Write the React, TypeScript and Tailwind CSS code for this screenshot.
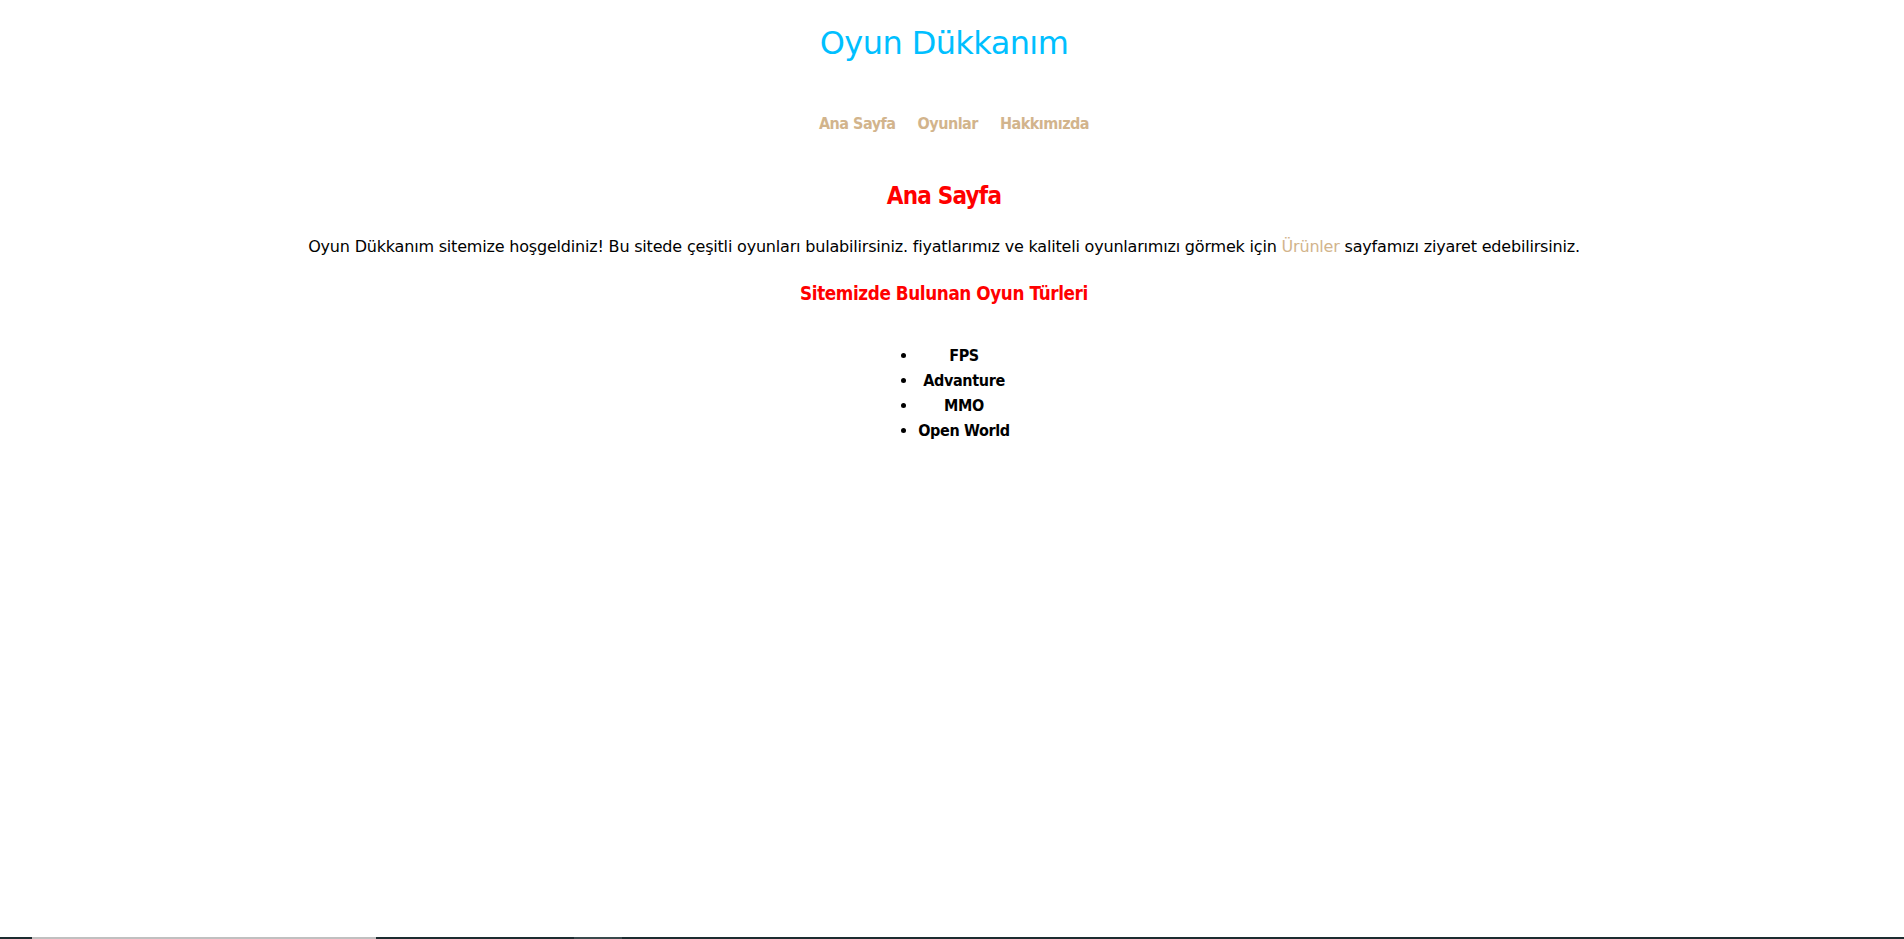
import React from "react";

const navLinks = ["Ana Sayfa", "Oyunlar", "Hakkımızda"];
const genres = ["FPS", "Advanture", "MMO", "Open World"];

const App = () => {
  return (
    <div className="relative flex min-h-[939px] flex-col bg-white pr-4 text-center font-['DejaVu_Sans',sans-serif] text-black">
      {/* Header */}
      <h1 className="mt-[24px] text-[32px] leading-[38px] font-normal tracking-[-0.6px] text-[#00bfff]">
        Oyun Dükkanım
      </h1>

      {/* Nav */}
      <ul className="mt-[50px] flex justify-center gap-[22px] pl-[20px] font-['DejaVu_Sans_Condensed','DejaVu_Sans',sans-serif] text-[16px] leading-[24px] font-bold tracking-[-0.5px]">
        {navLinks.map((link) => (
          <li key={link}>
            <a href="#" className="text-[#d2b48c]">
              {link}
            </a>
          </li>
        ))}
      </ul>

      {/* Main content */}
      <h2 className="mt-[46px] font-['DejaVu_Sans_Condensed','DejaVu_Sans',sans-serif] text-[24px] leading-[28px] font-bold tracking-[-0.8px] text-[#ff0000]">
        Ana Sayfa
      </h2>
      <p className="mt-[25px] text-[16px] leading-[24px] tracking-[-0.19px]">
        Oyun Dükkanım sitemize hoşgeldiniz! Bu sitede çeşitli oyunları
        bulabilirsiniz. fiyatlarımız ve kaliteli oyunlarımızı görmek için{" "}
        <a href="#" className="text-[#d2b48c]">
          Ürünler
        </a>{" "}
        sayfamızı ziyaret edebilirsiniz.
      </p>
      <h3 className="mt-[24px] font-['DejaVu_Sans_Condensed','DejaVu_Sans',sans-serif] text-[18.72px] leading-[22px] font-bold tracking-[-0.4px] text-[#ff0000]">
        Sitemizde Bulunan Oyun Türleri
      </h3>

      <div className="mt-[38px] flex justify-center">
        <ul className="list-disc pl-[40px] font-['DejaVu_Sans_Condensed','DejaVu_Sans',sans-serif] text-[16px] leading-[25px] font-bold tracking-[-0.35px]">
          {genres.map((g) => (
            <li key={g}>{g}</li>
          ))}
        </ul>
      </div>

      {/* bottom edge strip */}
      <div className="absolute bottom-0 left-0 flex h-[2px] w-full bg-[#1d2d30]">
        <div className="ml-[32px] w-[344px] bg-[#c0c0c0]" />
        <div className="ml-[198px] w-[48px] bg-[#3a4a4d]" />
      </div>
    </div>
  );
};

export default App;
